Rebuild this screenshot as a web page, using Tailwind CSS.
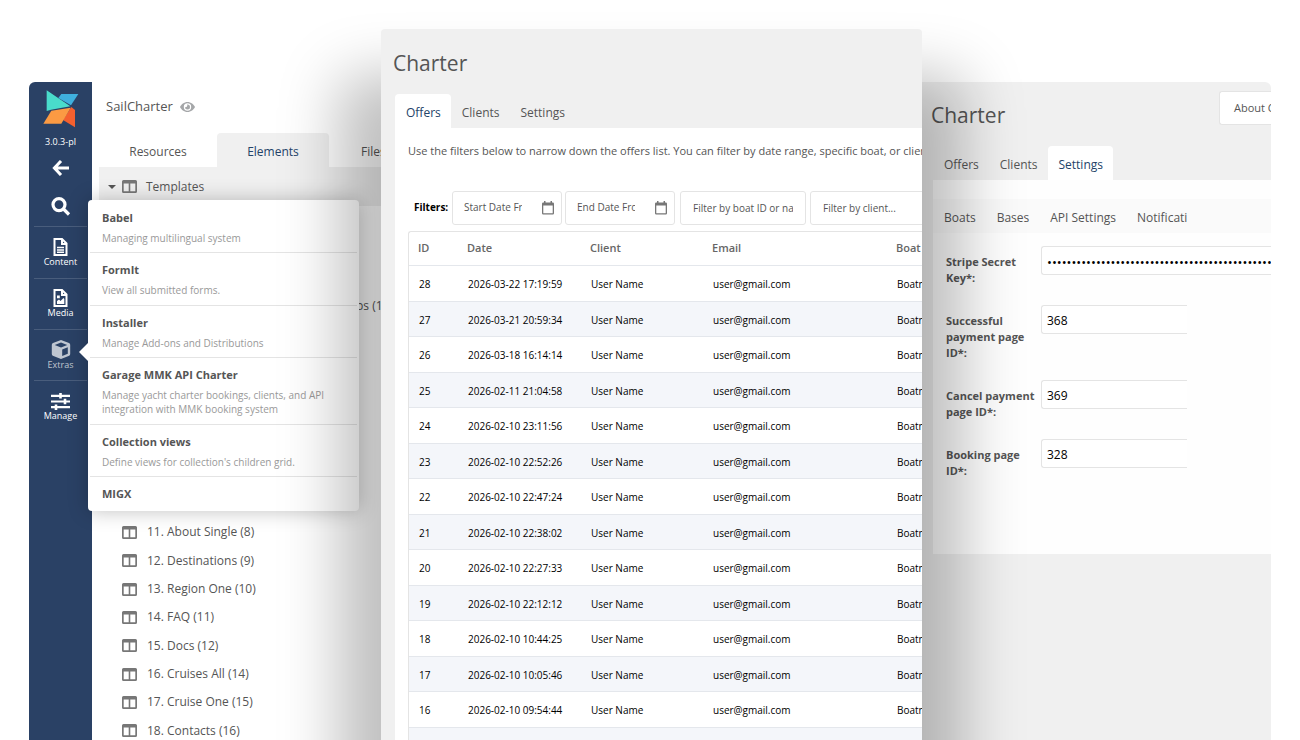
<!DOCTYPE html>
<html lang="en">

<head>
    <meta charset="UTF-8">
    <meta name="viewport" content="width=device-width, initial-scale=1.0">
    <title>Charter</title>
    <script src="https://cdn.jsdelivr.net/npm/@tailwindcss/browser@4"></script>
</head>

<body class="bg-white font-['Open_Sans',sans-serif] text-[#555555]">
    <svg class="hidden">
        <symbol id="columns" viewBox="0 0 15 13">
            <path fill="currentColor" fill-rule="evenodd"
                d="M1.500 0h12A1.500 1.500 0 0115 1.500v10a1.500 1.500 0 01-1.500 1.500h-12A1.500 1.500 0 010 11.500v-10A1.500 1.500 0 011.500 0zM1.700 3.600v7.700h5V3.600zM8.300 3.600v7.700h5V3.600z" />
        </symbol>
        <symbol id="calendar" viewBox="0 0 12 14">
            <path fill="currentColor" fill-rule="evenodd"
                d="M2 0h1.500v1.500h5V0H10v1.500h.8A1.200 1.200 0 0112 2.700v9.600a1.200 1.200 0 01-1.200 1.200H1.200A1.200 1.200 0 010 12.300V2.700a1.200 1.200 0 011.200-1.200H2zM1.300 4.500v7.700h9.400V4.500z" />
        </symbol>
    </svg>

    <main class="grid h-screen grid-cols-[352fr_541fr_349fr] overflow-hidden px-[29px]">

        <!-- manager: sidebar, tree, extras menu -->
        <section class="relative mt-[82px] flex min-w-0 overflow-hidden rounded-tl-md">
            <nav class="flex w-[63px] shrink-0 flex-col items-center bg-[#2a4165] text-[9px] leading-3 text-white">
                <svg class="mt-2 h-[38px] w-9" viewBox="68 44 108 114">
                    <path fill="#3fb0de" d="M123 56h51l-22 34-38-22z" />
                    <path fill="#49dccb" d="M79 45l71 48-58 10-13 4z" />
                    <path fill="#f4602f" d="M153 95l11 9v52l-36-22z" />
                    <path fill="#fb9a43" d="M93 106l58-9-28 48H69z" />
                </svg>
                <span class="mt-2 font-medium">3.0.3-pl</span>
                <button aria-label="Back" class="mt-3 h-4">
                    <svg class="h-4 w-[17px]" viewBox="0 0 17 16" fill="none" stroke="currentColor" stroke-width="3">
                        <path d="M9 1L2.400 8L9 15M2.500 8H17" />
                    </svg>
                </button>
                <button aria-label="Search" class="mt-[21px] h-[19px]">
                    <svg class="h-[19px] w-5" viewBox="0 0 20 19" fill="none" stroke="currentColor" stroke-width="3.200">
                        <circle cx="8" cy="7.600" r="6" />
                        <path d="M12.500 12L18 17.500" />
                    </svg>
                </button>
                <a href="#" class="mx-[5px] mt-2.5 flex h-[52px] flex-col items-center self-stretch border-t border-white/15 pt-[11px] font-medium">
                    <svg class="h-[18px] w-[15px]" viewBox="0 0 15 18" fill="none" stroke="currentColor" stroke-width="2">
                        <path d="M1.500 1h7.500l4.500 4.500V17h-12zM9 1v5h5" />
                        <path d="M4 9.500h7M4 12h7M4 14.200h7" stroke-width="1.400" />
                    </svg>
                    <span>Content</span>
                </a>
                <a href="#" class="mx-[5px] flex h-[51px] flex-col items-center self-stretch border-t border-white/15 pt-2.5 font-medium">
                    <svg class="h-[18px] w-[15px]" viewBox="0 0 15 18" fill="none" stroke="currentColor" stroke-width="2">
                        <path d="M1.500 1h7.500l4.500 4.500V17h-12zM9 1v5h5" />
                        <path fill="currentColor" stroke="none" d="M4 15v-3l2-1.500 1.500 1.500L10.500 9l.8 1v5zM4 6.500h2.800v2.800H4z" />
                    </svg>
                    <span>Media</span>
                </a>
                <a href="#" class="mx-[5px] flex h-[51px] flex-col items-center self-stretch border-t border-white/15 pt-2.5 font-medium text-white/70">
                    <svg class="h-[19px] w-5" viewBox="0 0 20 19" fill="currentColor">
                        <path fill-rule="evenodd"
                            d="M10 0l8 3q1.200.5 1.200 1.800v9.200q0 1.200-1 1.700L10 19l-8.200-3.300q-1-.5-1-1.700V4.800Q.8 3.500 2 3zM10 2.500L3.700 4.900 10 7.400l6.300-2.500zM11.200 9.500v6.600l5.600-2.400V7.200z" />
                    </svg>
                    <span>Extras</span>
                </a>
                <a href="#" class="mx-[5px] flex h-[51px] flex-col items-center self-stretch border-t border-white/15 pt-3 font-medium">
                    <svg class="h-[17px] w-[19px]" viewBox="0 0 19 17" fill="none" stroke="currentColor">
                        <path stroke-width="2.200" d="M0 2.800h19M0 8.500h19M0 14.200h19" />
                        <path stroke-width="2.600" d="M9.500 0v5.600M14 5.700v5.600M5 11.400v5.600" />
                    </svg>
                    <span>Manage</span>
                </a>
            </nav>

            <div class="flex min-w-0 grow flex-col pl-[7px] text-xs">
                <div class="flex h-[51px] shrink-0 items-center gap-[7px] pb-0.5 pl-[7px] text-[13px]">
                    <span>SailCharter</span>
                    <svg class="h-3 w-[15px] text-[#a5a7a9]" viewBox="0 0 15 12" fill="currentColor" fill-rule="evenodd">
                        <path
                            d="M7.500 1C11 1 13.800 3.500 15 6c-1.200 2.500-4 5-7.500 5S1.200 8.500 0 6c1.200-2.500 4-5 7.500-5zm0 1.300a3.700 3.700 0 100 7.400 3.700 3.700 0 000-7.400z" />
                        <path d="M7.500 3.500A2.500 2.500 0 115 6a1.600 1.600 0 002-2.400z" />
                    </svg>
                </div>
                <div class="flex h-[34px] shrink-0">
                    <button class="w-[118px] shrink-0 pt-1">Resources</button>
                    <button class="w-28 shrink-0 rounded-t bg-[#f0f0f0] pt-1 text-[#234368]">Elements</button>
                    <button class="shrink-0 px-8 pt-1">Files</button>
                </div>
                <div class="flex h-[39px] shrink-0 items-center bg-[#f0f0f0] pl-[9px] font-medium">
                    <span class="mr-1.5 border-x-4 border-t-4 border-x-transparent border-t-current"></span>
                    <svg class="mr-[9px] h-[13px] w-[15px] text-[#777777]"><use href="#columns" /></svg>
                    Templates
                </div>
                <ul id="tree" class="pt-[29px]"></ul>
            </div>

            <div
                class="absolute top-[118px] right-[22px] left-[59px] rounded-sm bg-white px-0.5 pt-px shadow-[0_0_20px_rgba(0,0,0,0.25)]">
                <span class="absolute top-[143px] -left-[9px] border-y-9 border-r-9 border-y-transparent border-r-white"></span>
                <ul id="menu" class="divide-y divide-[#e4e4e4]"></ul>
            </div>
        </section>

        <!-- offers -->
        <section
            class="relative z-10 mt-[29px] min-w-0 overflow-hidden rounded-t bg-[#f0f0f0] pl-3.5 text-xs shadow-[0_88px_60px_42px_rgba(0,0,0,0.25)]">
            <h1 class="-ml-0.5 flex h-[65px] items-center pt-0.5 text-[21px]">Charter</h1>
            <div class="flex h-[34px]">
                <button class="rounded-t bg-white pt-1 pr-2.5 pl-[11px] text-[#234368]">Offers</button>
                <button class="pt-1 pr-2.5 pl-[11px]">Clients</button>
                <button class="pt-1 pr-2.5 pl-[11px]">Settings</button>
            </div>
            <div class="h-full bg-white pl-[13px]">
                <p class="pt-3.5 text-[11px] leading-[18px] whitespace-nowrap">Use the filters below to narrow down the
                    offers list. You can filter by date range, specific boat, or client name.</p>
                <form class="mt-[31px] flex items-center text-[10px]">
                    <span class="w-11 shrink-0 pl-1.5 font-bold text-black">Filters:</span>
                    <label
                        class="mr-[3px] flex h-[34px] w-[110px] shrink-0 items-center justify-between rounded-[3px] border border-[#e4e4e4] pr-[7px] pl-[11px]">
                        <input aria-label="Start date" placeholder="Start Date From"
                            class="w-[58px] placeholder:text-[#555555]">
                        <svg class="h-3.5 w-3 text-[#777777]"><use href="#calendar" /></svg>
                    </label>
                    <label
                        class="mr-[5px] flex h-[34px] w-[110px] shrink-0 items-center justify-between rounded-[3px] border border-[#e4e4e4] pr-[7px] pl-[11px]">
                        <input aria-label="End date" placeholder="End Date From"
                            class="w-[58px] placeholder:text-[#555555]">
                        <svg class="h-3.5 w-3 text-[#777777]"><use href="#calendar" /></svg>
                    </label>
                    <input aria-label="Boat" placeholder="Filter by boat ID or name..."
                        class="mr-1 h-[34px] w-[126px] shrink-0 rounded-[3px] border border-[#e4e4e4] px-3 placeholder:text-[#555555]">
                    <input aria-label="Client" placeholder="Filter by client..."
                        class="h-[34px] w-[126px] shrink-0 rounded-[3px] border border-[#e4e4e4] px-3 placeholder:text-[#555555]">
                </form>
                <div class="mt-1.5 w-[700px] rounded-t-[3px] border-t border-l border-[#e4e4e4]">
                    <table class="w-full table-fixed text-left text-[11px]">
                        <thead>
                            <tr class="h-[33px] border-b border-[#e4e7ec] text-[#666666]">
                                <th class="w-12 pl-[9px] font-semibold">ID</th>
                                <th class="w-[123px] pl-2.5 font-semibold">Date</th>
                                <th class="w-[122px] pl-2.5 font-semibold">Client</th>
                                <th class="w-[184px] pl-2.5 font-semibold">Email</th>
                                <th class="pl-2.5 font-semibold">Boat</th>
                            </tr>
                        </thead>
                        <tbody id="offers" class="text-[10px] text-black"></tbody>
                    </table>
                </div>
            </div>
        </section>

        <!-- settings -->
        <section class="mt-[82px] min-w-0 overflow-hidden rounded-tr-md bg-[#f0f0f0] text-xs">
            <div class="flex h-16 items-start justify-between pt-[9px] pl-[9px]">
                <h1 class="pt-2 text-[21px] leading-8">Charter</h1>
                <button
                    class="h-[34px] w-[52px] shrink-0 overflow-hidden rounded-l-[3px] border border-r-0 border-[#e4e4e4] bg-white pl-3.5 text-left text-[11px] whitespace-nowrap">About
                    Charter</button>
            </div>
            <div class="flex h-[34px] pl-[11px]">
                <button class="pt-1 pr-2.5 pl-[11px]">Offers</button>
                <button class="pt-1 pr-2.5 pl-[11px]">Clients</button>
                <button class="rounded-t bg-white pt-1 pr-2.5 pl-[11px] text-[#234368]">Settings</button>
            </div>
            <div class="ml-[11px] bg-[#fefefe] pt-[19px] pb-[75px]">
                <div class="h-[34px] bg-[#fafafa]">
                    <div class="mr-[84px] flex h-full overflow-hidden whitespace-nowrap">
                        <button class="pt-1 pr-2.5 pl-[11px]">Boats</button>
                        <button class="pt-1 pr-2.5 pl-[11px]">Bases</button>
                        <button class="pt-1 pr-2.5 pl-[11px]">API Settings</button>
                        <button class="pt-1 pr-2.5 pl-[11px]">Notifications</button>
                    </div>
                </div>
                <form class="mt-[13px] flex flex-col gap-[19px] pl-[13px]">
                    <div class="flex items-start">
                        <label for="stripe" class="w-[95px] shrink-0 pt-2 pr-4 text-[11px] leading-4 font-bold">Stripe Secret
                            Key*:</label>
                        <input id="stripe" type="password" value="00000000000000000000000000000000000000000000000000000000"
                            class="h-[29px] min-w-0 grow rounded-l-[3px] border border-r-0 border-[#e4e4e4] bg-white pt-0.5 pl-[5px] text-[13px] text-black">
                    </div>
                    <div class="flex items-start">
                        <label for="success" class="w-[95px] shrink-0 pt-2 text-[11px] leading-4 font-bold">Successful
                            payment page ID*:</label>
                        <input id="success" value="368"
                            class="mr-[84px] h-[29px] min-w-0 grow rounded-l-[3px] border border-r-0 border-[#e4e4e4] bg-white pt-0.5 pl-[5px] text-xs text-black">
                    </div>
                    <div class="flex items-start">
                        <label for="cancel" class="w-[95px] shrink-0 pt-2 text-[11px] leading-4 font-bold">Cancel payment
                            page ID*:</label>
                        <input id="cancel" value="369"
                            class="mr-[84px] h-[29px] min-w-0 grow rounded-l-[3px] border border-r-0 border-[#e4e4e4] bg-white pt-0.5 pl-[5px] text-xs text-black">
                    </div>
                    <div class="flex items-start">
                        <label for="booking" class="w-[95px] shrink-0 pt-2 pr-2 text-[11px] leading-4 font-bold">Booking page
                            ID*:</label>
                        <input id="booking" value="328"
                            class="mr-[84px] h-[29px] min-w-0 grow rounded-l-[3px] border border-r-0 border-[#e4e4e4] bg-white pt-0.5 pl-[5px] text-xs text-black">
                    </div>
                </form>
            </div>
        </section>
    </main>

    <script>
        const templates = ["Home (1)", "Base (2)", "Collection with Service and Slide Tabs (17)", "Blog (3)", "Article (4)",
            "Boats (5)", "Boat (6)", "Offers (13)", "Search (18)", "About Page (7)", "About Single (8)", "Destinations (9)",
            "Region One (10)", "FAQ (11)", "Docs (12)", "Cruises All (14)", "Cruise One (15)", "Contacts (16)"]

        const extras = [
            ["Babel", "Managing multilingual system"],
            ["FormIt", "View all submitted forms."],
            ["Installer", "Manage Add-ons and Distributions"],
            ["Garage MMK API Charter", "Manage yacht charter bookings, clients, and API integration with MMK booking system"],
            ["Collection views", "Define views for collection's children grid."],
            ["MIGX", ""],
        ]

        const offers = [
            [28, "2026-03-22 17:19:59"], [27, "2026-03-21 20:59:34"], [26, "2026-03-18 16:14:14"],
            [25, "2026-02-11 21:04:58"], [24, "2026-02-10 23:11:56"], [23, "2026-02-10 22:52:26"],
            [22, "2026-02-10 22:47:24"], [21, "2026-02-10 22:38:02"], [20, "2026-02-10 22:27:33"],
            [19, "2026-02-10 22:12:12"], [18, "2026-02-10 10:44:25"], [17, "2026-02-10 10:05:46"],
            [16, "2026-02-10 09:54:44"], [15, "2026-02-10 09:41:20"],
        ]

        document.getElementById("tree").innerHTML = templates.map((name, i) => `
            <li class="flex h-7 items-center pl-[23px] whitespace-nowrap nth-[3n]:h-[29px]">
                <svg class="mr-2.5 h-[13px] w-[15px] shrink-0 text-[#777777]"><use href="#columns" /></svg>${i + 1}. ${name}
            </li>`).join("")

        document.getElementById("menu").innerHTML = extras.map(([title, text]) => `
            <li class="even:pb-px">
                <a href="#" class="block px-3 pt-2 pb-[7px]">
                    <span class="block text-[11px] leading-[18px] font-bold">${title}</span>
                    ${text && `<span class="mt-1 block pr-2 text-[10px] leading-3.5 text-[#999999]">${text}</span>`}
                </a>
            </li>`).join("")

        document.getElementById("offers").innerHTML = offers.map(([id, date]) => `
            <tr class="h-9 border-b border-[#e4e7ec] even:h-[35px] even:bg-[#f4f6fa]">
                <td class="pt-1 pl-2.5">${id}</td>
                <td class="pt-1 pl-[11px]">${date}</td>
                <td class="pt-1 pl-[11px]">User Name</td>
                <td class="pt-1 pl-[11px]">user@gmail.com</td>
                <td class="pt-1 pl-[11px]">Boatname</td>
            </tr>`).join("")
    </script>
</body>

</html>
